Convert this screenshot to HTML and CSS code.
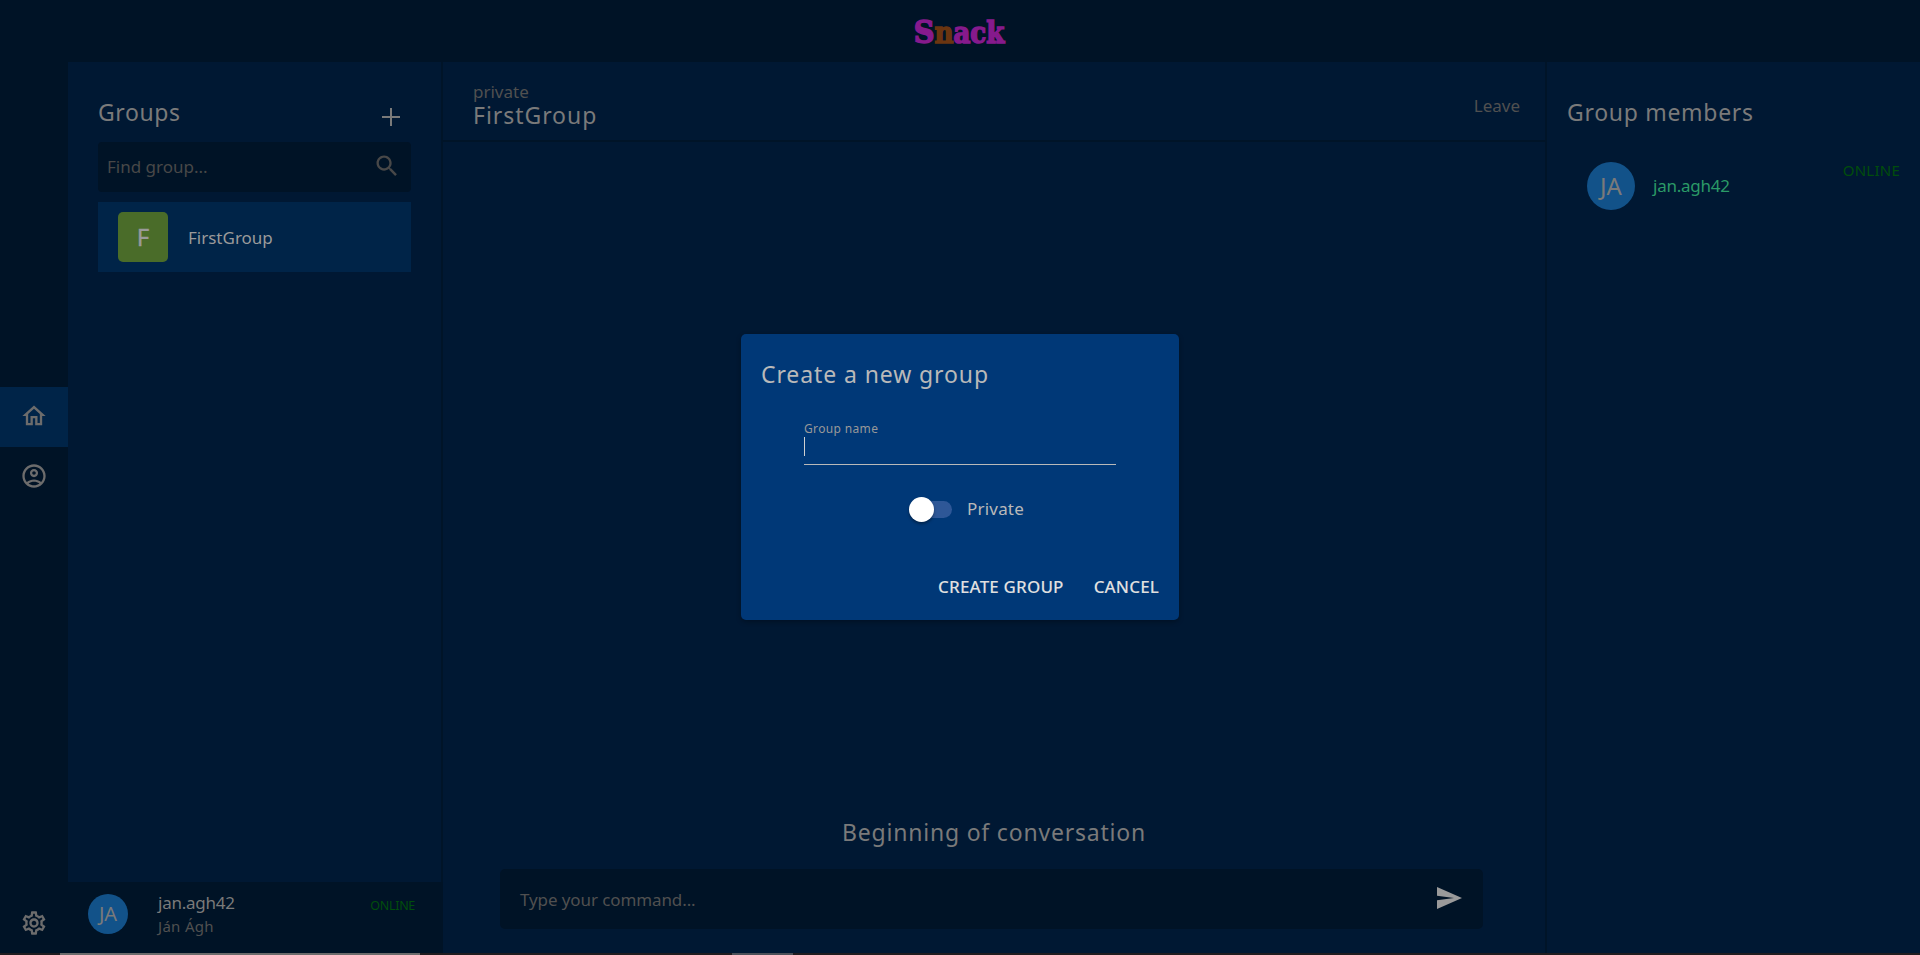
FILE: index.html
```
<!DOCTYPE html>
<html lang="en">
<head>
<meta charset="utf-8">
<title>Snack</title>
<link rel="stylesheet" href="styles.css">
</head>
<body>
<div class="app">
  <header class="topbar">
    <div class="logo"><b class="logo-s">S</b><b class="logo-n">n</b>ack</div>
  </header>
  <div class="body">
    <nav class="rail">
      <div class="rail-main">
        <div class="rail-item active"><svg width="28" height="28" viewBox="0 0 24 24"><path d="M12 5.69l5 4.5V18h-2v-6H9v6H7v-7.81l5-4.5M12 3L2 12h3v8h6v-6h2v6h6v-8h3L12 3z"/></svg></div>
        <div class="rail-item"><svg width="28" height="28" viewBox="0 0 24 24"><path d="M12 2C6.48 2 2 6.48 2 12s4.48 10 10 10 10-4.480 10-10S17.520 2 12 2zM7.350 18.500C8.660 17.560 10.260 17 12 17s3.340.56 4.650 1.500C15.340 19.440 13.740 20 12 20s-3.340-.56-4.650-1.500zm10.790-1.380C16.450 15.800 14.320 15 12 15s-4.450.8-6.140 2.120C4.700 15.730 4 13.950 4 12c0-4.420 3.580-8 8-8s8 3.580 8 8c0 1.950-.7 3.730-1.860 5.120zM12 6c-1.930 0-3.500 1.570-3.500 3.500S10.070 13 12 13s3.500-1.570 3.500-3.500S13.930 6 12 6zm0 5c-.83 0-1.500-.67-1.500-1.500S11.170 8 12 8s1.500.67 1.500 1.500S12.830 11 12 11z"/></svg></div>
      </div>
      <div class="rail-item"><svg width="28" height="28" viewBox="0 0 24 24"><path d="M19.430 12.980c.04-.32.07-.64.07-.98 0-.34-.03-.66-.07-.98l2.110-1.650c.19-.15.24-.42.12-.64l-2-3.460c-.09-.16-.26-.25-.44-.25-.06 0-.12.01-.17.03l-2.490 1c-.52-.4-1.080-.73-1.690-.98l-.38-2.650C14.460 2.180 14.250 2 14 2h-4c-.25 0-.46.18-.49.42l-.38 2.650c-.61.25-1.170.59-1.690.98l-2.490-1c-.06-.02-.12-.03-.18-.03-.17 0-.34.09-.43.25l-2 3.460c-.13.22-.07.49.12.64l2.110 1.650c-.04.32-.07.65-.07.98 0 .33.03.66.07.98l-2.110 1.650c-.19.15-.24.42-.12.64l2 3.460c.09.16.26.25.44.25.06 0 .12-.01.17-.03l2.490-1c.52.4 1.080.73 1.690.98l.38 2.650c.03.24.24.42.49.42h4c.25 0 .46-.18.49-.42l.38-2.650c.61-.25 1.170-.59 1.690-.98l2.490 1c.06.02.12.03.18.03.17 0 .34-.09.43-.25l2-3.460c.12-.22.07-.49-.12-.64l-2.110-1.650zm-1.980-1.710c.04.31.05.52.05.73 0 .21-.02.43-.05.73l-.14 1.130.89.7 1.080.84-.7 1.210-1.270-.51-1.040-.42-.9.68c-.43.32-.84.56-1.250.73l-1.060.43-.16 1.130-.2 1.350h-1.400l-.19-1.350-.16-1.130-1.060-.43c-.43-.18-.83-.41-1.230-.71l-.91-.7-1.060.43-1.270.51-.7-1.210 1.080-.84.89-.7-.14-1.130c-.03-.31-.05-.54-.05-.74s.02-.43.05-.73l.14-1.130-.89-.7-1.080-.84.7-1.210 1.270.51 1.040.42.9-.68c.43-.32.84-.56 1.250-.73l1.060-.43.16-1.130.2-1.350h1.390l.19 1.350.16 1.130 1.060.43c.43.18.83.41 1.230.71l.91.7 1.060-.43 1.270-.51.7 1.210-1.070.85-.89.7.14 1.130zM12 8c-2.210 0-4 1.790-4 4s1.790 4 4 4 4-1.790 4-4-1.790-4-4-4zm0 6c-1.100 0-2-.9-2-2s.9-2 2-2 2 .9 2 2-.9 2-2 2z"/></svg></div>
    </nav>
    <aside class="groups">
      <div class="groups-top">
        <div class="groups-head">
          <h2 class="title t-groups">Groups</h2>
          <svg width="18" height="18" viewBox="0 0 18 18"><path d="M8 0h2v8h8v2h-8v8H8v-8H0V8h8z"/></svg>
        </div>
        <div class="search">
          <span class="t-find">Find group...</span>
          <svg width="28" height="28" viewBox="0 0 24 24"><path d="M15.500 14h-.79l-.28-.27C15.410 12.590 16 11.110 16 9.500 16 5.910 13.090 3 9.500 3S3 5.910 3 9.500 5.910 16 9.500 16c1.610 0 3.090-.59 4.230-1.570l.27.28v.79l5 4.990L20.490 19l-4.990-5zm-6 0C7.010 14 5 11.990 5 9.500S7.010 5 9.500 5 14 7.010 14 9.500 11.990 14 9.500 14z"/></svg>
        </div>
        <div class="group-row">
          <div class="group-avatar">F</div>
          <span class="t-row">FirstGroup</span>
        </div>
      </div>
      <footer class="me">
        <div class="avatar avatar-s">JA</div>
        <div class="me-names">
          <div class="t-user">jan.agh42</div>
          <div class="t-real">Ján Ágh</div>
        </div>
        <span class="t-online-s">ONLINE</span>
      </footer>
    </aside>
    <main class="chat">
      <div class="chat-head">
        <div>
          <div class="t-private">private</div>
          <div class="title t-first">FirstGroup</div>
        </div>
        <span class="t-leave">Leave</span>
      </div>
      <div class="chat-log"><div class="title t-begin">Beginning of conversation</div></div>
      <div class="composer">
        <span class="t-type">Type your command...</span>
        <svg width="25" height="22" viewBox="0 0 25 22"><path d="M0 0L25 11L0 22V13.300L17 11L0 8.700z"/></svg>
      </div>
    </main>
    <aside class="members">
      <h2 class="title t-members">Group members</h2>
      <div class="member">
        <div class="avatar">JA</div>
        <span class="t-member">jan.agh42</span>
        <span class="t-online">ONLINE</span>
      </div>
    </aside>
  </div>
  <div class="edge"><i class="edge-a"></i><i class="edge-b"></i></div>
</div>
<div class="overlay">
  <section class="dialog">
    <h2 class="title t-create">Create a new group</h2>
    <div class="field">
      <label class="t-label">Group name</label>
      <div class="caret"></div>
    </div>
    <div class="toggle-row">
      <div class="track"><div class="thumb"></div></div>
      <span class="t-toggle">Private</span>
    </div>
    <div class="actions"><span class="t-submit">CREATE GROUP</span><span class="t-cancel">CANCEL</span></div>
  </section>
</div>
</body>
</html>
```
FILE: styles.css
```
* { box-sizing: border-box; }
body {
  margin: 0;
  overflow: hidden;
  font-family: "Noto Sans", "Open Sans", sans-serif;
  font-size: 17px;
  line-height: 24px;
  color: #7a7a7a;
  background: #001833;
}
h2 { margin: 0; font-weight: 400; }
svg { display: block; fill: currentColor; flex: none; }
span, .title, label { white-space: nowrap; }

.app { height: 955px; display: flex; flex-direction: column; }
.topbar { height: 62px; flex: none; background: #001326; display: flex; justify-content: center; padding: 13px 2px 0 0; }
.logo { font: bold 29px/40px "DejaVu Serif Condensed", "DejaVu Serif", serif; font-stretch: condensed; color: #861a8c; -webkit-text-stroke: 1.5px currentColor; white-space: nowrap; }
.logo-s { font-size: 32px; line-height: 1; }
.logo-n { color: #6b3510; }
.body { flex: 1; display: flex; min-height: 0; }

.rail { width: 68px; background: #001326; display: flex; flex-direction: column; color: #6c6c6c; }
.rail-main { flex: 1; padding-top: 325px; }
.rail-item { height: 60px; display: flex; align-items: center; justify-content: center; padding-bottom: 2px; }
.rail-main + .rail-item { padding-bottom: 0; }
.rail-item.active { background: #002448; }

.groups { width: 375px; border-right: 2px solid #001428; display: flex; flex-direction: column; }
.groups-top { flex: 1; padding: 32px 30px 0; }
.groups-head { height: 48px; display: flex; justify-content: space-between; }
.groups-head svg { margin: 14px 11px 0 0; }
.title { font-size: 23px; line-height: 36px; }
.t-groups { letter-spacing: .6px; }
.search { height: 50px; border-radius: 4px; background: #001326; display: flex; justify-content: space-between; align-items: center; padding: 0 10px 1px 9px; color: #484848; }
.search svg { margin-top: -1px; }
.group-row { margin-top: 10px; height: 70px; background: #002448; display: flex; align-items: center; padding-left: 20px; gap: 20px; color: #9a9a9a; }
.t-row { padding-top: 1px; }
.group-avatar { width: 50px; height: 50px; border-radius: 5px; background: #4a6c29; text-align: center; font-size: 24px; line-height: 50px; -webkit-text-stroke: .4px currentColor; }
.me { height: 71px; background: #001326; margin-right: -2px; display: flex; padding: 12px 28px 0 20px; }
.avatar { width: 48px; height: 48px; border-radius: 50%; background: #125289; text-align: center; font-size: 24px; line-height: 47px; flex: none; }
.avatar-s { width: 40px; height: 40px; font-size: 20px; line-height: 39px; }
.me-names { flex: 1; padding-left: 30px; margin-top: -3px; }
.t-user, .t-member { letter-spacing: -.25px; }
.t-real { font-size: 15px; line-height: 22px; color: #505050; letter-spacing: .3px; }
.t-online-s { font-size: 12.500px; line-height: 24px; color: #004d0c; letter-spacing: -.3px; }

.chat { flex: 1; display: flex; flex-direction: column; }
.chat-head { height: 80px; border-bottom: 2px solid #001428; padding: 20px 25px 0 30px; display: flex; justify-content: space-between; }
.t-private { color: #505050; line-height: 20px; }
.t-first { line-height: 27px; letter-spacing: .95px; }
.t-leave { color: #505050; line-height: 47px; }
.chat-log { flex: 1; display: flex; align-items: flex-end; justify-content: center; padding-bottom: 19px; }
.t-begin { letter-spacing: .8px; }
.composer { height: 60px; margin: 0 62px 24px 57px; border-radius: 5px; background: #001326; display: flex; align-items: center; justify-content: space-between; padding: 0 21px 0 20px; color: #505050; }
.t-type { letter-spacing: -.1px; padding-top: 1px; }
.composer svg { color: #9a9a9a; margin-top: -2px; }

.members { width: 375px; border-left: 2px solid #001428; padding: 32px 20px 0; }
.t-members { letter-spacing: .7px; }
.member { margin-top: 32px; padding-left: 20px; display: flex; }
.t-member { flex: 1; line-height: 47px; padding-left: 18px; color: #2b9a67; }
.t-online { font-size: 15px; line-height: 17px; color: #004d0c; letter-spacing: .25px; }

.edge { height: 2px; flex: none; background: #201c1f; display: flex; padding-left: 60px; gap: 312px; }
.edge-a { width: 360px; background: #6b6b6b; }
.edge-b { width: 61px; background: #4b5058; }

.overlay { position: absolute; inset: 0; display: flex; align-items: center; justify-content: center; }
.dialog { width: 438px; height: 286px; border-radius: 5px; background: #003877; box-shadow: 0 2px 5px rgba(0,0,0,.3); padding: 22px 20px 0; display: flex; flex-direction: column; color: #b9b9b9; margin-bottom: 1px; }
.t-create { letter-spacing: .9px; }
.field { margin: 27px 43px 0; height: 46px; border-bottom: 1px solid #b9b9b9; }
.t-label { display: block; font-size: 12px; line-height: 18px; color: #999; letter-spacing: .35px; padding-top: 1px; margin-bottom: -1px; }
.caret { width: 1px; height: 19px; background: #d0d0d0; }
.toggle-row { margin-top: 24px; height: 41px; display: flex; align-items: center; padding-left: 148px; gap: 15px; }
.t-toggle { letter-spacing: .2px; margin-top: -2px; }
.track { width: 43px; height: 17px; border-radius: 9px; background: #2e5797; display: flex; align-items: center; }
.thumb { width: 25px; height: 25px; flex: none; border-radius: 50%; background: #fff; box-shadow: 0 2px 3px rgba(0,0,0,.35); }
.actions { margin-top: 45px; display: flex; justify-content: flex-end; gap: 30px; font-weight: 500; color: #e0e0e0; letter-spacing: .15px; }
```
